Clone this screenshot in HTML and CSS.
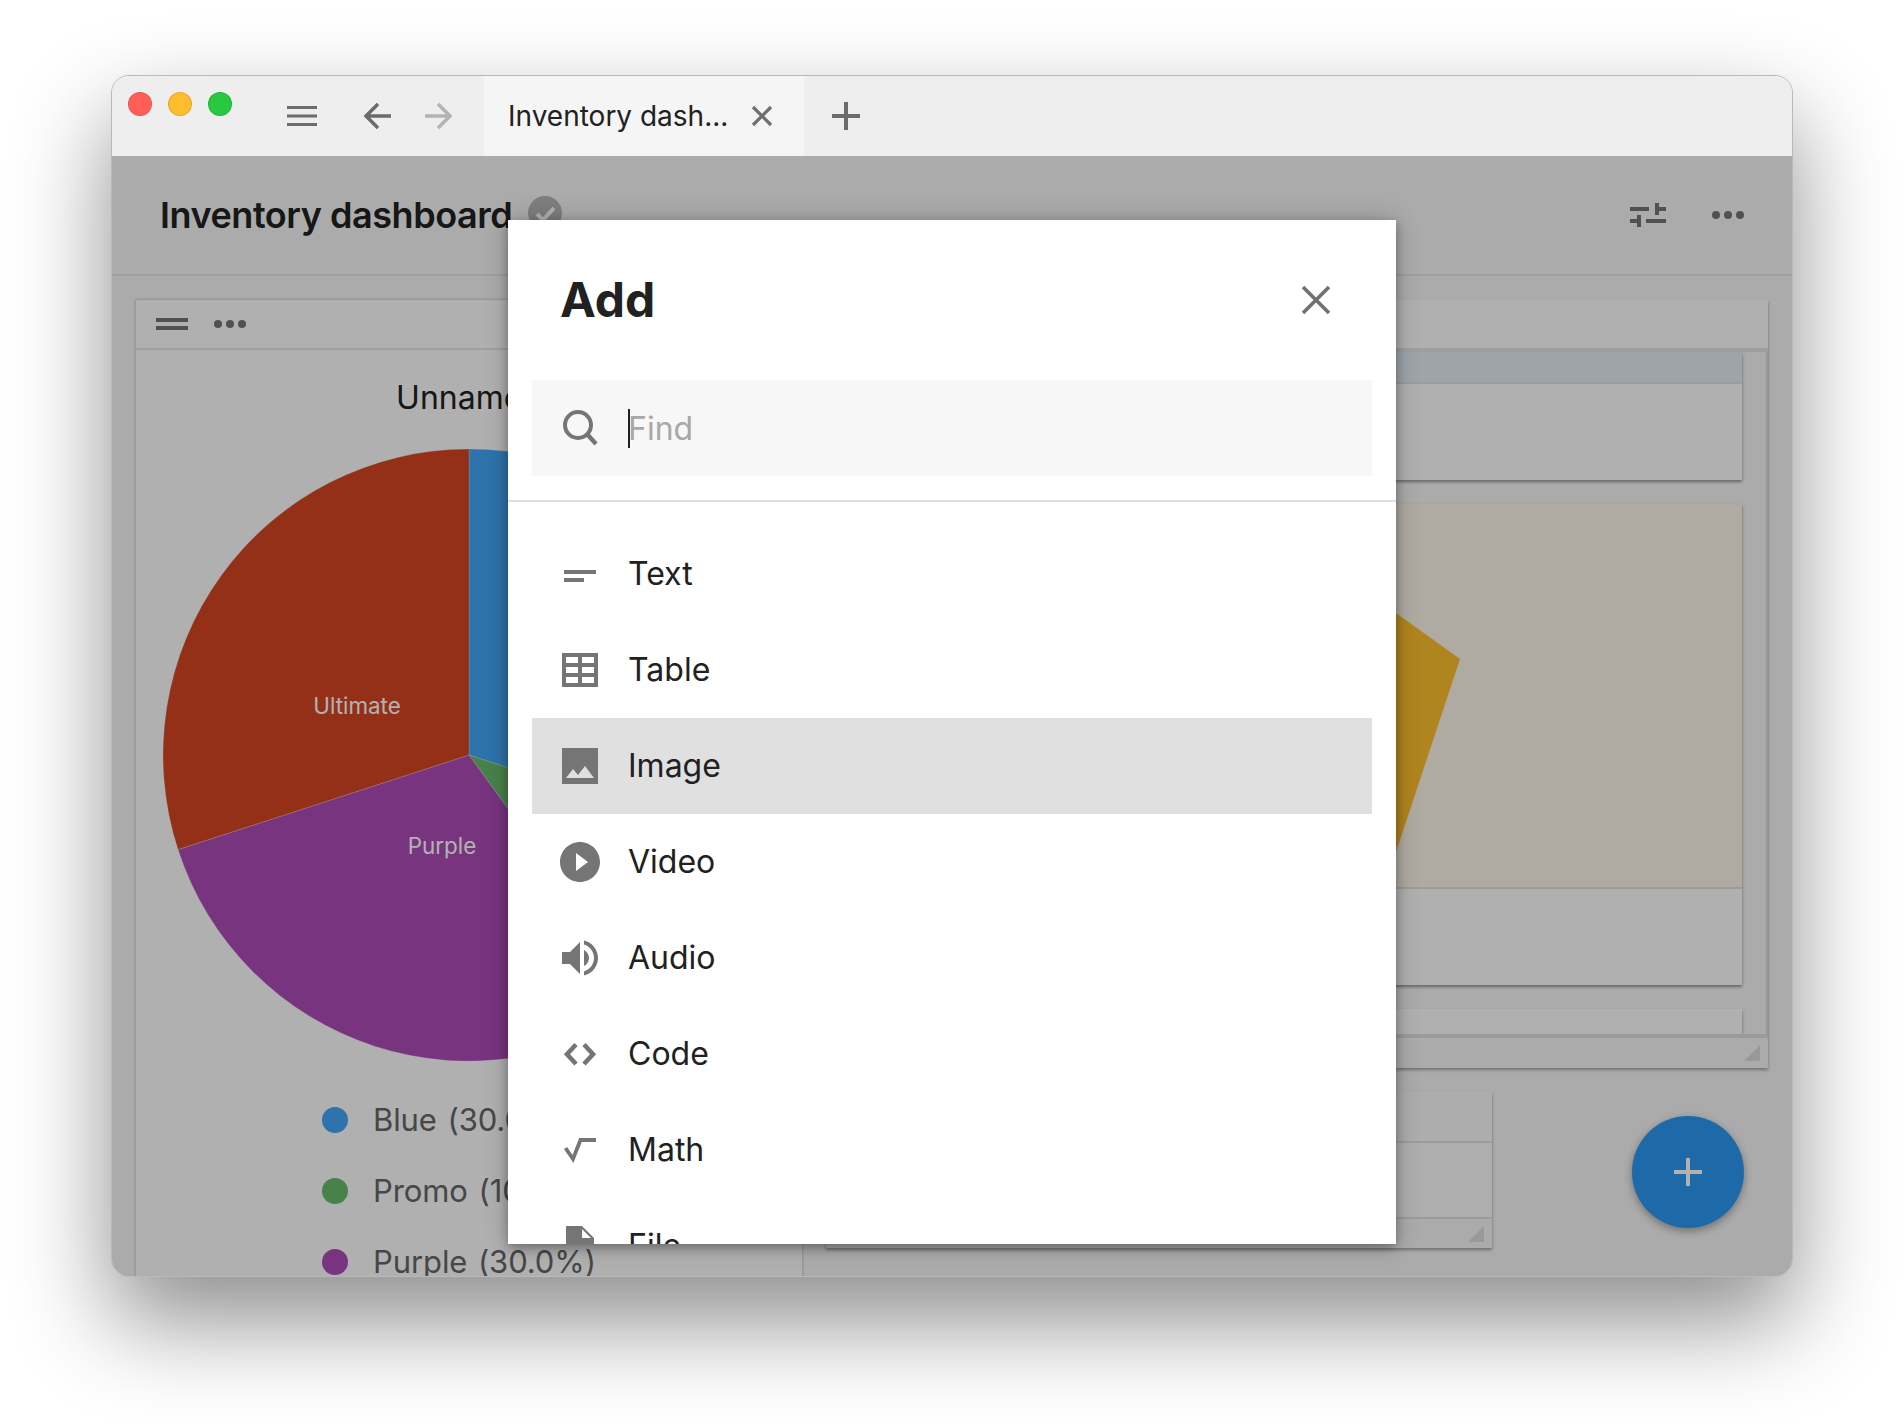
FILE: index.html
```html
<!DOCTYPE html>
<html lang="en">
<head>
<meta charset="utf-8">
<title>Inventory dashboard</title>
<link rel="stylesheet" href="styles.css">
</head>
<body>
<div class="window">
  <div class="tabbar">
    <div class="lights"><i class="light red"></i><i class="light yellow"></i><i class="light green"></i></div>
    <svg class="menu-ic" width="30" height="20" viewBox="0 0 30 20"><path d="M0 0h30v3H0zM0 8.5h30v3H0zM0 17h30v3H0z"/></svg>
    <svg class="back-ic" width="28" height="28" viewBox="0 0 28 28"><path d="M27 14H2M14 2L2 14l12 12" fill="none" stroke-width="3.4"/></svg>
    <svg class="fwd-ic" width="28" height="28" viewBox="0 0 28 28"><path d="M1 14h25M14 2l12 12-12 12" fill="none" stroke-width="3.4"/></svg>
    <div class="tab">
      <span class="tab-label">Inventory dash...</span>
      <svg class="tab-close" width="22" height="22" viewBox="0 0 22 22"><path d="M2 2l18 18M20 2L2 20" fill="none" stroke-width="3.2"/></svg>
    </div>
    <svg class="plus-ic" width="28" height="28" viewBox="0 0 28 28"><path d="M12 0h4v12h12v4H16v12h-4V16H0v-4h12z"/></svg>
  </div>
  <div class="content">
    <header class="topbar">
      <h1 class="doc-title">Inventory dashboard</h1>
      <svg class="saved-ic" width="34" height="34" viewBox="0 0 34 34"><circle cx="17" cy="17" r="17"/><path d="M9 18l6 6 11-12" fill="none" stroke="#fff" stroke-width="4"/></svg>
      <span class="spacer"></span>
      <svg class="tune-ic" width="36" height="24" viewBox="0 0 36 24"><path d="M0 4h19v4H0zM25 0h4v4h7v4h-7v4h-4zM0 16h7v-4h4v12H7v-4H0zM16 16h20v4H16z"/></svg>
      <svg class="dots-ic" width="32" height="10" viewBox="0 0 32 10"><circle cx="4" cy="5" r="4"/><circle cx="16" cy="5" r="4"/><circle cx="28" cy="5" r="4"/></svg>
    </header>
    <main class="dashboard">
      <section class="panel chart-panel">
        <div class="panel-bar">
          <svg class="drag-ic" width="32" height="12" viewBox="0 0 32 12"><path d="M0 0h32v4H0zM0 8h32v4H0z"/></svg>
          <svg class="dots-ic" width="32" height="10" viewBox="0 0 32 10"><circle cx="4" cy="5" r="4"/><circle cx="16" cy="5" r="4"/><circle cx="28" cy="5" r="4"/></svg>
        </div>
        <div class="chart-body">
          <div class="chart-title">Unnamed</div>
          <svg class="pie" width="612" height="612" viewBox="0 0 612 612">
            <path class="s-blue" d="M306 306V0A306 306 0 0 1 597 400.6Z"/>
            <path class="s-green" d="M306 306L597 400.6A306 306 0 0 1 486 553.6Z"/>
            <path class="s-purple" d="M306 306L486 553.6A306 306 0 0 1 15 400.6Z"/>
            <path class="s-red" d="M306 306L15 400.6A306 306 0 0 1 306 0Z"/>
            <text class="pie-label" x="194" y="265">Ultimate</text>
            <text class="pie-label" x="279" y="405">Purple</text>
          </svg>
          <ul class="legend">
            <li class="legend-row"><i class="dot d-blue"></i>Blue (30.0%)</li>
            <li class="legend-row"><i class="dot d-green"></i>Promo (10.0%)</li>
            <li class="legend-row"><i class="dot d-purple"></i>Purple (30.0%)</li>
            <li class="legend-row"><i class="dot d-red"></i>Ultimate (30.0%)</li>
          </ul>
        </div>
      </section>
      <section class="panel list-panel">
        <div class="panel-bar"></div>
        <div class="scroller">
          <article class="card">
            <div class="card-band"></div>
            <div class="card-foot"></div>
          </article>
          <article class="card">
            <div class="card-image">
              <svg class="card-art" width="892" height="383" viewBox="0 0 892 383"><path d="M480 60L546 109L610 155L546 348L500 383H480Z"/></svg>
            </div>
            <div class="card-foot"></div>
          </article>
          <article class="card">
            <div class="card-foot"></div>
          </article>
        </div>
        <div class="panel-foot"><i class="resizer"></i></div>
      </section>
      <section class="panel small-panel">
        <div class="small-top"></div>
        <div class="small-body"></div>
        <div class="panel-foot"><i class="resizer"></i></div>
      </section>
    </main>
    <div class="fab"><svg width="28" height="28" viewBox="0 0 28 28"><path d="M12 0h4v12h12v4H16v12h-4V16H0v-4h12z"/></svg></div>
    <div class="overlay">
      <div class="modal">
        <div class="modal-head">
          <h2 class="modal-title">Add</h2>
          <svg class="modal-close" width="30" height="30" viewBox="0 0 30 30"><path d="M2 2l26 26M28 2L2 28" fill="none" stroke-width="3.6"/></svg>
        </div>
        <div class="search">
          <svg class="search-ic" width="36" height="36" viewBox="0 0 36 36"><circle cx="16" cy="15" r="13" fill="none" stroke-width="4"/><path d="M25.500 24.500L34 34" fill="none" stroke-width="4.4"/></svg>
          <span class="caret"></span><span class="placeholder">Find</span>
        </div>
        <div class="list">
          <div class="item"><span class="item-ic"><svg width="36" height="36" viewBox="0 0 36 36"><path d="M2 14h32v4H2zM2 22h20v4H2z"/></svg></span><span class="item-label">Text</span></div>
          <div class="item"><span class="item-ic"><svg width="36" height="34" viewBox="0 0 36 34"><path fill-rule="evenodd" d="M0 0h36v34H0zM4 4v6h12V4zM20 4v6h12V4zM4 14v6h12v-6zM20 14v6h12v-6zM4 24v6h12v-6zM20 24v6h12v-6z"/></svg></span><span class="item-label">Table</span></div>
          <div class="item active"><span class="item-ic"><svg width="36" height="36" viewBox="3 3 18 18"><path d="M21 21V3H3v18h18zM8.500 13.500l2.500 3.010L14.500 12l4.500 6H5l3.500-4.500z"/></svg></span><span class="item-label">Image</span></div>
          <div class="item"><span class="item-ic"><svg width="40" height="40" viewBox="2 2 20 20"><path d="M12 2C6.480 2 2 6.480 2 12s4.480 10 10 10 10-4.480 10-10S17.520 2 12 2zm-2 14.500v-9l6 4.500-6 4.500z"/></svg></span><span class="item-label">Video</span></div>
          <div class="item"><span class="item-ic"><svg width="36" height="36" viewBox="3 3 18 18"><path d="M3 9v6h4l5 5V4L7 9H3zm13.500 3c0-1.770-1.020-3.290-2.500-4.030v8.050c1.480-.73 2.500-2.250 2.500-4.020zM14 3.230v2.060c2.890.86 5 3.540 5 6.710s-2.110 5.850-5 6.710v2.060c4.010-.91 7-4.490 7-8.770s-2.990-7.860-7-8.770z"/></svg></span><span class="item-label">Audio</span></div>
          <div class="item"><span class="item-ic"><svg width="36" height="36" viewBox="0 0 36 36"><path class="code-ic" d="M14 8.500L5 18.200l9 9.800M22 8.500L31 18.200 22 28"/></svg></span><span class="item-label">Code</span></div>
          <div class="item"><span class="item-ic"><svg width="36" height="36" viewBox="0 0 36 36"><path class="line-ic" d="M3.500 16l7.500 11L18.500 8H34"/></svg></span><span class="item-label">Math</span></div>
          <div class="item"><span class="item-ic"><svg width="28" height="40" viewBox="6 2 14 20"><path fill-rule="evenodd" d="M14 2H6v20h14V8zM14 3.500V8h4.500z"/></svg></span><span class="item-label">File</span></div>
        </div>
      </div>
    </div>
  </div>
</div>
</body>
</html>
```
FILE: styles.css
```css
* { box-sizing: border-box; }
html, body { margin: 0; height: 100%; }
body {
  width: 1904px;
  height: 1424px;
  padding: 75px 0 0 111px;
  background: #fff;
  overflow: hidden;
  font-family: Inter, "Liberation Sans", sans-serif;
  color: #212121;
}

.window {
  width: 1682px;
  height: 1202px;
  border: 1px solid #b9b9b9;
  border-radius: 18px;
  overflow: hidden;
  background: #f5f5f5;
  box-shadow: 0 44px 96px rgba(0, 0, 0, .45);
  display: flex;
  flex-direction: column;
}

.tabbar {
  height: 80px;
  flex: none;
  display: flex;
  align-items: center;
  background: #eee;
}
.lights { display: flex; gap: 16px; margin: -24px 0 0 16px; }
.light { width: 24px; height: 24px; border-radius: 50%; border: 1px solid rgba(0, 0, 0, .1); }
.red { background: #ff5f57; }
.yellow { background: #ffbd2e; }
.green { background: #28c840; }
.menu-ic { margin-left: 55px; fill: #6b6b6b; }
.back-ic { margin-left: 47px; stroke: #6b6b6b; }
.fwd-ic { margin-left: 32px; stroke: #b3b3b3; }
.tab {
  width: 320px;
  height: 80px;
  margin-left: 32px;
  padding-left: 24px;
  display: flex;
  align-items: center;
  background: #f5f5f5;
  font-size: 28px;
  color: #212121;
}
.tab-label { width: 243px; white-space: nowrap; }
.tab-close { stroke: #707070; }
.plus-ic { margin-left: 28px; fill: #6b6b6b; }

.content { position: relative; flex: 1; min-height: 0; overflow: hidden; }

.topbar {
  height: 120px;
  padding: 0 48px;
  display: flex;
  align-items: center;
  background: #f5f5f5;
  border-bottom: 2px solid #e4e4e4;
}
.doc-title { margin: 0; font-size: 36px; font-weight: 600; letter-spacing: -.45px; color: #212121; }
.saved-ic { margin: -4px 0 0 16px; fill: #b5b5b5; }
.spacer { flex: 1; }
.tune-ic { fill: #757575; margin-right: 46px; }
.dots-ic { fill: #757575; }
.drag-ic { fill: #757575; }

.dashboard {
  padding: 24px 24px 0;
  display: grid;
  grid-template-columns: 666px 942px;
  grid-template-rows: 768px 156px;
  gap: 24px;
  align-items: start;
}
.panel {
  background: #f5f5f5;
  box-shadow: 0 2px 3px rgba(0, 0, 0, .35);
}

.panel-bar {
  height: 50px;
  padding-left: 20px;
  display: flex;
  align-items: center;
  gap: 26px;
  background: #fcfcfc;
  border-bottom: 2px solid #e4e4e4;
}

.chart-panel {
  grid-row: 1 / 3;
  height: 1100px;
  background: #fcfcfc;
  box-shadow: 0 0 3px rgba(0, 0, 0, .3);
}
.chart-body { display: flex; flex-direction: column; align-items: center; }
.chart-title { margin-top: 24px; height: 48px; line-height: 48px; font-size: 32px; color: #212121; }
.pie { margin-top: 27px; flex: none; }
.s-blue { fill: #42a5f5; }
.s-green { fill: #66bb6a; }
.s-purple { fill: #ad4bb6; }
.s-red { fill: #d44522; }
.s-blue, .s-green, .s-purple, .s-red { stroke: #fff; stroke-width: .4; stroke-opacity: .6; }
.pie-label { font-size: 22.4px; fill: #fff; text-anchor: middle; font-family: Inter, "Liberation Sans", sans-serif; }
.legend { list-style: none; margin: 23px 0 0 6px; padding: 0; }
.legend-row {
  height: 71px;
  display: flex;
  align-items: center;
  gap: 25px;
  font-size: 31px;
  letter-spacing: -.1px;
  word-spacing: 2px;
  color: #666;
  white-space: nowrap;
}
.dot { width: 26px; height: 26px; border-radius: 50%; flex: none; }
.d-blue { background: #42a5f5; }
.d-green { background: #66bb6a; }
.d-purple { background: #ad4bb6; }
.d-red { background: #d44522; }

.list-panel { height: 768px; }
.list-panel .panel-bar { height: 52px; border-bottom-width: 4px; }
.scroller {
  height: 686px;
  padding: 0 24px;
  overflow: hidden;
  border-right: 2px solid #dadada;
  border-bottom: 4px solid #dedede;
}
.card { margin-bottom: 24px; background: #fcfcfc; box-shadow: 0 2px 3px rgba(0, 0, 0, .4); }
.card-band { height: 32px; background: #e3ecf4; border-bottom: 2px solid #e0e0e0; }
.card-image { height: 385px; background: #fbf5e8; border-bottom: 2px solid #e0e0e0; }
.card-art { display: block; fill: #fcbd2c; }
.card-foot { height: 96px; }
.panel-foot {
  height: 30px;
  display: flex;
  justify-content: flex-end;
  padding: 7px 8px 0 0;
}
.resizer {
  width: 16px;
  height: 16px;
  background: #dcdcdc;
  clip-path: polygon(100% 0, 100% 100%, 0 100%);
}

.small-panel { width: 666px; height: 156px; }
.small-top { height: 51px; background: #f8f8f8; border-bottom: 2px solid #e0e0e0; }
.small-body { height: 76px; background: #fafafa; border-bottom: 2px solid #e0e0e0; }
.small-panel .panel-foot { height: 29px; }

.fab {
  position: absolute;
  right: 48px;
  bottom: 48px;
  width: 112px;
  height: 112px;
  border-radius: 50%;
  background: #2b97f0;
  box-shadow: 0 3px 8px rgba(0, 0, 0, .35);
  display: flex;
  align-items: center;
  justify-content: center;
  fill: #fff;
}

.overlay {
  position: absolute;
  inset: 0;
  padding: 64px 0 0 396px;
  background: rgba(0, 0, 0, .3);
}
.modal {
  width: 888px;
  height: 1024px;
  background: #fff;
  box-shadow: 0 4px 10px rgba(0, 0, 0, .3), 0 0 24px rgba(0, 0, 0, .2);
  display: flex;
  flex-direction: column;
}
.modal-head {
  height: 160px;
  flex: none;
  padding: 0 65px 0 52px;
  display: flex;
  align-items: center;
  justify-content: space-between;
}
.modal-title { margin: -2px 0 0; font-size: 48px; font-weight: 700; color: #212121; }
.modal-close { stroke: #707070; }

.search {
  height: 96px;
  flex: none;
  margin: 0 24px;
  padding-left: 30px;
  display: flex;
  align-items: center;
  background: #f7f7f7;
  font-size: 32px;
}
.search-ic { stroke: #757575; flex: none; }
.caret { width: 2px; height: 39px; margin-left: 30px; background: #212121; }
.placeholder { margin-left: -2px; color: #a8a8a8; }

.list {
  flex: 1;
  min-height: 0;
  margin-top: 24px;
  padding: 24px 24px 0;
  overflow: hidden;
  border-top: 2px solid #e0e0e0;
}
.item {
  height: 96px;
  padding-left: 30px;
  display: flex;
  align-items: center;
  font-size: 32px;
  color: #212121;
}
.item.active { background: #e0e0e0; }
.item-label { margin-bottom: 2px; }
.item-ic {
  width: 36px;
  margin-right: 30px;
  flex: none;
  display: flex;
  justify-content: center;
  fill: #757575;
}
.item-ic svg { flex: none; }
.line-ic { fill: none; stroke: #757575; stroke-width: 3.8; }
.code-ic { fill: none; stroke: #757575; stroke-width: 4.6; }
```
